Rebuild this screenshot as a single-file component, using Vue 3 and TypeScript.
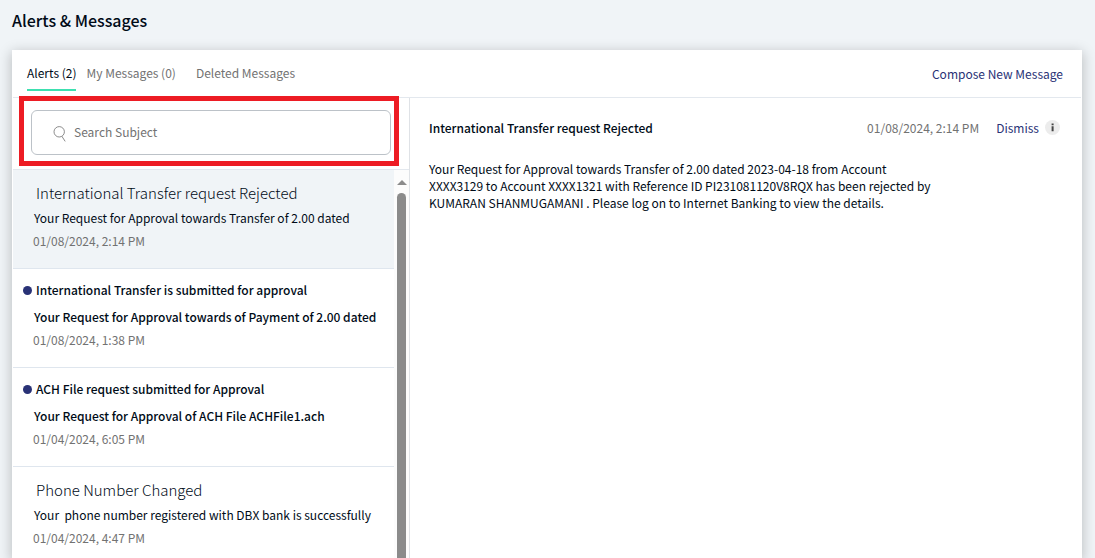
<script setup lang="ts">
import { ref } from 'vue'

interface Alert {
  id: number
  subject: string
  preview: string
  date: string
  unread: boolean
}

const tabs = ['Alerts (2)', 'My Messages (0)', 'Deleted Messages']
const activeTab = ref(0)
const selectedId = ref(1)
const query = ref('')

const alerts: Alert[] = [
  { id: 1, subject: 'International Transfer request Rejected', preview: 'Your Request for Approval towards Transfer of 2.00 dated', date: '01/08/2024, 2:14 PM', unread: false },
  { id: 2, subject: 'International Transfer is submitted for approval', preview: 'Your Request for Approval towards of Payment of 2.00 dated', date: '01/08/2024, 1:38 PM', unread: true },
  { id: 3, subject: 'ACH File request submitted for Approval', preview: 'Your Request for Approval of ACH File ACHFile1.ach', date: '01/04/2024, 6:05 PM', unread: true },
  { id: 4, subject: 'Phone Number Changed', preview: 'Your\u00a0 phone number registered with DBX bank is successfully', date: '01/04/2024, 4:47 PM', unread: false },
]
</script>

<template>
  <main class="page">
    <h1 class="title">Alerts &amp; Messages</h1>
    <section class="card">
      <header class="bar">
        <nav class="tabs">
          <button
            v-for="(tab, i) in tabs"
            :key="tab"
            type="button"
            class="tab"
            :class="{ active: i === activeTab }"
            @click="activeTab = i"
          >{{ tab }}</button>
        </nav>
        <a href="#compose" class="link">Compose New Message</a>
      </header>
      <div class="panes">
        <div class="inbox">
          <div class="search-area">
            <label class="search">
              <svg class="glass" viewBox="0 0 14 17" aria-hidden="true">
                <circle cx="6.2" cy="6.8" r="5.2" />
                <path d="M8.8 11.2 L12.2 16.4" />
              </svg>
              <input v-model="query" type="text" placeholder="Search Subject" aria-label="Search Subject">
            </label>
            <div class="highlight"></div>
          </div>
          <div class="scroller">
            <ul class="list">
              <li v-for="a in alerts" :key="a.id">
                <button
                  type="button"
                  class="item"
                  :class="{ unread: a.unread, selected: a.id === selectedId }"
                  @click="selectedId = a.id"
                >
                  <span class="subject"><i class="dot"></i>{{ a.subject }}</span>
                  <span class="preview">{{ a.preview }}</span>
                  <span class="date">{{ a.date }}</span>
                </button>
              </li>
            </ul>
            <div class="track">
              <svg class="arrow" viewBox="0 0 10 5" aria-hidden="true"><path d="M0 5 L5 0 L10 5 Z" /></svg>
              <div class="thumb"></div>
            </div>
          </div>
        </div>
        <article class="detail">
          <div class="detail-head">
            <h2>International Transfer request Rejected</h2>
            <span class="date">01/08/2024, 2:14 PM</span>
            <button type="button" class="link dismiss">Dismiss</button>
            <button type="button" class="info" aria-label="Information">
              <svg viewBox="0 0 15 15" aria-hidden="true">
                <circle class="disc" cx="7.5" cy="7.5" r="7.5" />
                <path d="M6.6 3.6 H8.6 V5.2 H6.6 Z M6.6 6.2 H8.6 V11.2 H6.6 Z" />
              </svg>
            </button>
          </div>
          <p>Your Request for Approval towards Transfer of 2.00 dated 2023-04-18 from Account XXXX3129 to Account XXXX1321 with Reference ID PI231081120V8RQX has been rejected by KUMARAN SHANMUGAMANI . Please log on to Internet Banking to view the details.</p>
        </article>
      </div>
    </section>
  </main>
</template>

<style>
body {
  background: #f0f4f7;
}
</style>

<style scoped>
.page {
  box-sizing: border-box;
  display: flex;
  flex-direction: column;
  height: 100vh;
  overflow: hidden;
  padding: 7px 13px 0 12px;
  background: #f0f4f7;
  color: #000b17;
  font-family: "Noto Sans CJK SC", "Open Sans", sans-serif;
  font-size: 12px;
  line-height: 17px;
}
button,
input {
  margin: 0;
  padding: 0;
  border: 0;
  background: none;
  color: inherit;
  font: inherit;
}
button {
  cursor: pointer;
}
.title {
  margin: 0 0 17px;
  font-size: 16px;
  font-weight: 500;
  line-height: 26px;
}
.card {
  display: flex;
  flex: 1;
  flex-direction: column;
  min-height: 0;
  background: #fff;
  box-shadow: 0 3px 12px 1px rgba(0, 0, 0, 0.22);
}
.bar {
  display: flex;
  justify-content: space-between;
  align-items: flex-start;
  height: 47px;
  margin: 0 1px;
  padding: 0 18px 0 14px;
  border-bottom: 1px solid #e3e8ee;
}
.bar > .link {
  padding-top: 15px;
}
.tabs {
  display: flex;
  gap: 20px;
}
.tab {
  height: 41px;
  padding-top: 6px;
  color: #727272;
  border-bottom: 2px solid transparent;
}
.tab.active {
  margin-right: -10px;
  color: #000b17;
  border-color: #3de0b0;
}
.link {
  color: #293276;
  text-decoration: none;
}
.panes {
  display: flex;
  flex: 1;
  min-height: 0;
}
.inbox {
  display: flex;
  flex: 0 0 397px;
  flex-direction: column;
  min-width: 0;
  min-height: 0;
  border-right: 1px solid #dfe2e6;
}
.search-area {
  position: relative;
  margin-left: 1px;
  padding: 12px 18px 14px;
  border-bottom: 1px solid #e3e8ee;
}
.search {
  box-sizing: border-box;
  display: flex;
  align-items: center;
  gap: 7px;
  height: 45px;
  padding: 0 21px;
  border: 1px solid #bcc2c8;
  border-radius: 6px;
}
.glass {
  width: 14px;
  height: 17px;
  margin-top: 2px;
  fill: none;
  stroke: #8c8c8c;
  stroke-width: 1;
}
.search input {
  flex: 1;
  min-width: 0;
  padding-bottom: 2px;
  outline: 0;
}
.search input::placeholder {
  color: #727272;
  opacity: 1;
}
.highlight {
  position: absolute;
  inset: -2px 10px 3px 6px;
  border: 5px solid #ed1c24;
  pointer-events: none;
}
.scroller {
  display: flex;
  flex: 1;
  min-height: 0;
  margin-left: 1px;
}
.list {
  flex: 1;
  min-width: 0;
  margin: 0;
  padding: 0;
  overflow: hidden;
  list-style: none;
}
.item {
  box-sizing: border-box;
  display: flex;
  flex-direction: column;
  width: 100%;
  height: 99px;
  padding: 13px 0 0 21px;
  border-bottom: 1px solid #dfe6ee;
  text-align: left;
  white-space: nowrap;
}
.selected {
  background: #f0f4f7;
}
.subject {
  display: flex;
  align-items: center;
  gap: 4px;
  margin-left: 2px;
  font-size: 15px;
  font-weight: 300;
  line-height: 20px;
}
.preview {
  margin-top: 6px;
}
.item .date {
  margin: 6px 0 0 -1px;
}
.date {
  color: #727272;
}
.dot {
  display: none;
  width: 9px;
  height: 9px;
  border-radius: 50%;
  background: #293276;
}
.unread .dot {
  display: block;
}
.unread .subject {
  margin-left: -11px;
  font-size: 12px;
  line-height: 16px;
}
.unread .subject,
.unread .preview {
  font-weight: 500;
}
.unread .preview {
  margin-top: 10px;
}
.track {
  display: flex;
  flex: 0 0 15px;
  flex-direction: column;
  align-items: center;
  padding-top: 10px;
  gap: 8px;
  background: #fcfcfc;
}
.arrow {
  width: 10px;
  height: 5px;
  fill: #8b8b8b;
}
.thumb {
  flex: 1;
  width: 9px;
  border-radius: 5px 5px 0 0;
  background: #8b8b8b;
}
.detail {
  flex: 1;
  min-width: 0;
  padding: 21px 22px 0 19px;
}
.detail-head {
  display: flex;
  align-items: center;
}
h2 {
  flex: 1;
  margin: 0;
  font-size: 12px;
  font-weight: 500;
}
.dismiss {
  margin-left: 17px;
}
.info {
  width: 15px;
  height: 15px;
  margin-left: 6px;
}
.info svg {
  display: block;
  fill: #444;
}
.info .disc {
  fill: #ececec;
}
.detail p {
  max-width: 508px;
  margin: 24px 0 0;
}
</style>
